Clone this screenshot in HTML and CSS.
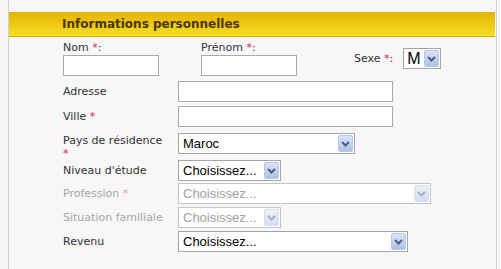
FILE: index.html
```html
<!DOCTYPE html>
<html lang="fr">
  <head>
    <meta charset="UTF-8" />
    <meta name="viewport" content="width=device-width, initial-scale=1.0" />
    <title>Informations personnelles</title>
    <link rel="stylesheet" href="styles.css">
  </head>
  <body>
    <div class="panel">
      <h2 class="titre">Informations personnelles</h2>

      <div class="identite">
        <div class="champ nom">
          <label>Nom <span class="req">*</span>:</label>
          <input type="text" class="texte court" />
        </div>
        <div class="champ prenom">
          <label>Prénom <span class="req">*</span>:</label>
          <input type="text" class="texte court" />
        </div>
        <div class="sexe">
          <label>Sexe <span class="req">*</span>:</label>
          <div class="select sexe-select">
            <span class="valeur">M</span>
            <span class="fleche"><svg width="9" height="6" viewBox="0 0 9 6"><polyline points="1,1 4.5,4.5 8,1" /></svg></span>
          </div>
        </div>
      </div>

      <div class="champs">
        <div class="ligne">
          <label>Adresse</label>
          <input type="text" class="texte long" />
        </div>
        <div class="ligne">
          <label>Ville <span class="req">*</span></label>
          <input type="text" class="texte long" />
        </div>
        <div class="ligne double">
          <label>Pays de résidence <span class="req">*</span></label>
          <div class="select pays">
            <span class="valeur">Maroc</span>
            <span class="fleche"><svg width="9" height="6" viewBox="0 0 9 6"><polyline points="1,1 4.5,4.5 8,1" /></svg></span>
          </div>
        </div>
        <div class="ligne">
          <label>Niveau d'étude</label>
          <div class="select etroit">
            <span class="valeur">Choisissez...</span>
            <span class="fleche"><svg width="9" height="6" viewBox="0 0 9 6"><polyline points="1,1 4.5,4.5 8,1" /></svg></span>
          </div>
        </div>
        <div class="ligne inactif">
          <label>Profession <span class="req">*</span></label>
          <div class="select profession">
            <span class="valeur">Choisissez...</span>
            <span class="fleche"><svg width="9" height="6" viewBox="0 0 9 6"><polyline points="1,1 4.5,4.5 8,1" /></svg></span>
          </div>
        </div>
        <div class="ligne inactif">
          <label>Situation familiale</label>
          <div class="select etroit">
            <span class="valeur">Choisissez...</span>
            <span class="fleche"><svg width="9" height="6" viewBox="0 0 9 6"><polyline points="1,1 4.5,4.5 8,1" /></svg></span>
          </div>
        </div>
        <div class="ligne">
          <label>Revenu</label>
          <div class="select revenu">
            <span class="valeur">Choisissez...</span>
            <span class="fleche"><svg width="9" height="6" viewBox="0 0 9 6"><polyline points="1,1 4.5,4.5 8,1" /></svg></span>
          </div>
        </div>
      </div>
    </div>
  </body>
</html>
```

FILE: styles.css
```css
body {
  margin: 0;
  background-color: #f5f5f5;
  font-family: "DejaVu Sans", Verdana, sans-serif;
  font-size: 11px;
  color: #333;
}

.panel {
  margin-left: 8px;
  width: 489px;
  height: 269px;
  box-sizing: border-box;
  padding-top: 12px;
  background-color: #f7f7f7;
  border-left: 1px solid #d2d2d2;
  border-right: 1px solid #d2d2d2;
}

.titre {
  margin: 0 1px 0 0;
  height: 25px;
  box-sizing: border-box;
  padding-left: 53px;
  font-size: 12px;
  line-height: 24px;
  font-weight: bold;
  color: #4a3504;
  background: linear-gradient(#e6b203, #f4e024);
  border-bottom: 1px solid #e2a812;
}

.identite {
  display: flex;
  align-items: center;
  padding: 4px 0 0 54px;
}

.champ {
  display: flex;
  flex-direction: column;
}

.champ label {
  line-height: 13px;
  margin-bottom: 1px;
}

.prenom {
  margin-left: 42px;
}

.sexe {
  display: flex;
  align-items: center;
  margin-left: 57px;
}

.sexe label {
  margin-right: 10px;
}

.req {
  color: #d8253e;
}

.texte {
  margin: 0;
  padding: 0 2px;
  height: 21px;
  box-sizing: border-box;
  border: 1px solid #a9a9a9;
  background-color: white;
}

.court {
  width: 96px;
}

.long {
  width: 215px;
}

.champs {
  display: grid;
  grid-template-columns: 115px auto;
  grid-template-rows: 25px 27px 27px 23px 24px 24px 24px;
  padding: 5px 0 0 54px;
}

.ligne {
  display: contents;
}

.ligne label {
  padding-top: 4px;
  width: 105px;
  line-height: 13px;
}

.ligne.double label {
  padding-top: 1px;
}

.ligne > .texte,
.ligne > .select {
  justify-self: start;
}

.select {
  display: flex;
  align-items: center;
  height: 21px;
  box-sizing: border-box;
  padding: 1px;
  border: 1px solid #a5a5a5;
  background-color: white;
  font-family: "Liberation Sans", Arial, sans-serif;
  font-size: 13px;
  color: black;
}

.valeur {
  flex: 1;
  padding-left: 3px;
  white-space: nowrap;
  overflow: hidden;
}

.fleche {
  display: flex;
  align-items: center;
  justify-content: center;
  width: 15px;
  height: 17px;
  box-sizing: border-box;
  border: 1px solid #b5c6e6;
  border-radius: 2px;
  background: linear-gradient(#d9e3f6, #afc2e4);
}

.fleche polyline {
  fill: none;
  stroke: #4b5f86;
  stroke-width: 2;
}

.sexe-select {
  width: 38px;
  font-size: 16px;
}

.sexe-select .valeur {
  padding-left: 2px;
}

.pays {
  width: 177px;
}

.etroit {
  width: 103px;
}

.profession {
  width: 253px;
}

.revenu {
  width: 230px;
}

.inactif label {
  color: #a6a6a6;
}

.inactif .req {
  color: #eaa0aa;
}

.inactif .select {
  color: #a0a0a0;
  border-color: #c4c4c4;
}

.inactif .fleche {
  border-color: #d6dff0;
  background: linear-gradient(#edf1fa, #d3ddee);
}

.inactif .fleche polyline {
  stroke: #a4b0c8;
}
```
